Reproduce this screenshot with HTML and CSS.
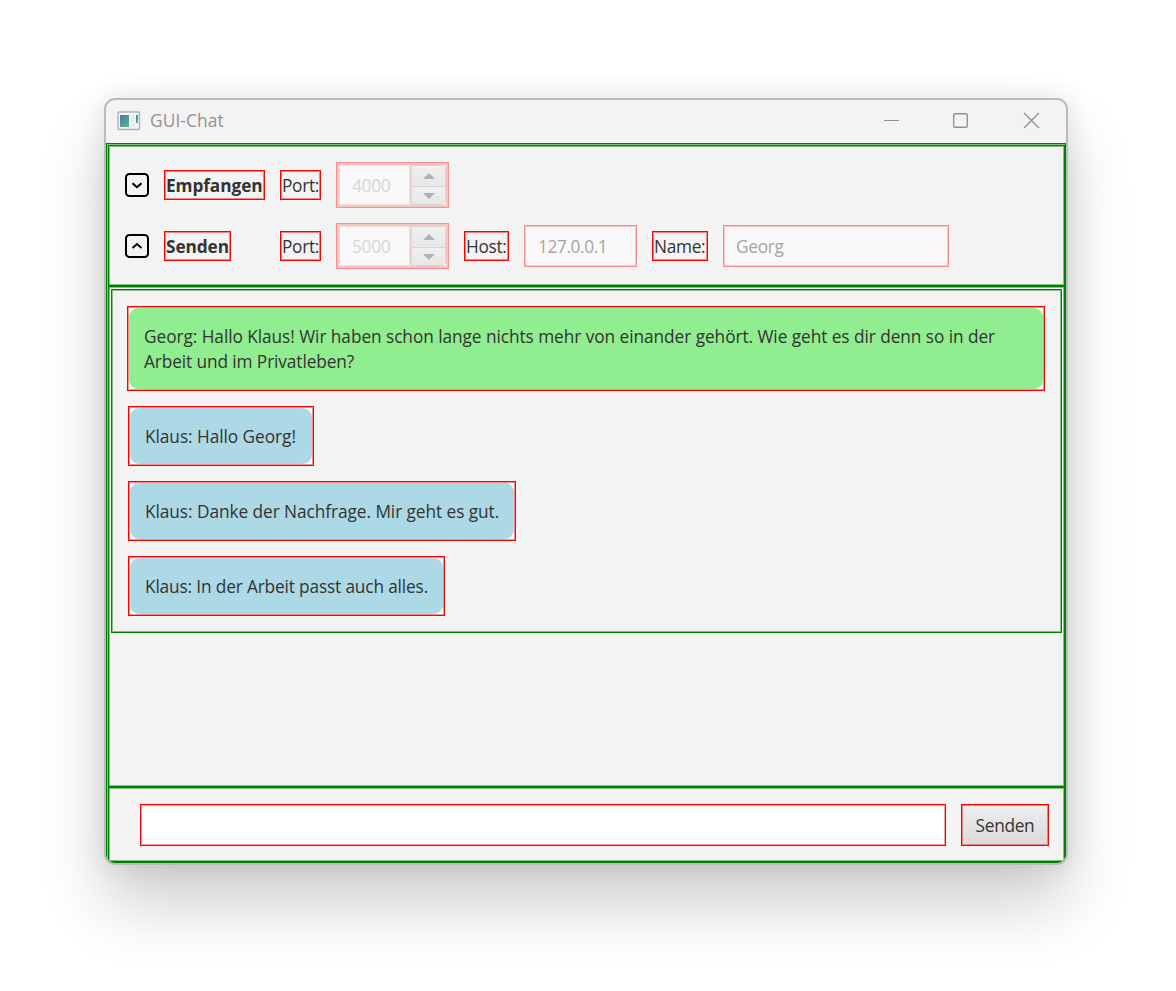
FILE: index.html
```html
<!DOCTYPE html>
<html lang="de">
<head>
<meta charset="utf-8">
<title>GUI-Chat</title>
<link rel="stylesheet" href="styles.css">
</head>
<body>
<div class="window">
  <header class="titlebar">
    <svg class="app-icon" width="24" height="20" viewBox="0 0 24 20">
      <defs><linearGradient id="g" x1="0" y1="0" x2="0.6" y2="1"><stop offset="0" stop-color="#4777a8"/><stop offset="1" stop-color="#5cb18a"/></linearGradient></defs>
      <rect x="1" y="1" width="21.500" height="17.500" rx="1" fill="#f5f6f7" stroke="#a9b2ba" stroke-width="1.400"/>
      <rect x="3" y="4" width="9" height="12" fill="url(#g)"/>
      <path d="M14 4h4v7h-4zM14 12.500h4v3.500h-4z" fill="#e9ebec"/>
      <rect x="19" y="4" width="2" height="8" fill="url(#g)"/>
    </svg>
    <span class="title">GUI-Chat</span>
    <svg class="controls" width="158" height="18" viewBox="0 0 158 18" fill="none" stroke="#929292" stroke-width="1.400">
      <path d="M1 9.500h15" stroke-width="1"/>
      <rect x="70.700" y="2.700" width="13.600" height="13.600" rx="1.200"/>
      <path d="M141 2l15 15M156 2l-15 15"/>
    </svg>
  </header>
  <main class="app">
    <section class="pane settings">
      <svg class="toggle" width="24" height="24" viewBox="0 0 24 24"><rect x="1" y="1" width="22" height="22" rx="3.500"/><path d="M7.500 10.200l4.500 4 4.500-4"/></svg>
      <span class="label strong empf">Empfangen</span>
      <span class="label port">Port:</span>
      <div class="spinner"><span class="value">4000</span><div class="arrows"><i class="up"></i><i class="down"></i></div></div>

      <svg class="toggle second" width="24" height="24" viewBox="0 0 24 24"><rect x="1" y="1" width="22" height="22" rx="3.500"/><path d="M7.500 14l4.500-4 4.500 4"/></svg>
      <span class="label strong send">Senden</span>
      <span class="label port">Port:</span>
      <div class="spinner"><span class="value">5000</span><div class="arrows"><i class="up"></i><i class="down"></i></div></div>
      <span class="label host">Host:</span>
      <div class="field disabled ip">127.0.0.1</div>
      <span class="label name">Name:</span>
      <div class="field disabled person">Georg</div>
    </section>
    <section class="pane history">
      <div class="messages">
        <div class="message own"><p><span class="l1">Georg: Hallo Klaus! Wir haben schon lange nichts mehr von einander gehört. Wie geht es dir denn so in der</span><br><span class="l2">Arbeit und im Privatleben?</span></p></div>
        <div class="message w1"><p>Klaus: Hallo Georg!</p></div>
        <div class="message w2"><p>Klaus: Danke der Nachfrage. Mir geht es gut.</p></div>
        <div class="message w3"><p>Klaus: In der Arbeit passt auch alles.</p></div>
      </div>
    </section>
    <section class="pane compose">
      <div class="field entry"></div>
      <div class="button">Senden</div>
    </section>
  </main>
</div>
</body>
</html>
```

FILE: styles.css
```css
* { box-sizing: border-box; }
body {
  margin: 0;
  height: 991px;
  padding: 98px 0 0 104px;
  overflow: hidden;
  background: #fff;
  color: #333;
  font: 17.300px/25px "Open Sans", "Noto Sans", sans-serif;
  letter-spacing: -0.300px;
  white-space: nowrap;
}
.window {
  width: 964px;
  height: 767px;
  border: 2px solid #bbb;
  border-radius: 11px;
  overflow: hidden;
  background: #f3f3f3;
  box-shadow: 0 40px 64px rgba(0, 0, 0, .19), 0 0 28px rgba(0, 0, 0, .1);
}
.titlebar {
  height: 43px;
  padding: 0 25px 2px 11px;
  display: flex;
  align-items: center;
  color: #929292;
}
.title { margin-left: 9px; flex: 1; letter-spacing: 0.120px; }
.controls { margin-bottom: 2px; }
.app {
  height: 720px;
  border: 1px solid green;
  padding: 1px 0 0 1px;
  background: #80c080;
  display: flex;
  flex-direction: column;
}
.pane {
  border: 1px solid green;
  background: #f3f3f3;
  box-shadow: inset 0 0 0 1px #80c080;
}
.settings {
  height: 141px;
  padding: 16px;
  display: grid;
  grid-template-columns: 24px 101px 41px 113px 45px 113px 56px 226px;
  grid-auto-rows: 46px;
  gap: 15px;
  align-items: center;
  justify-items: start;
}
.second { grid-column: 1; }
.toggle { display: block; fill: none; stroke: #000; stroke-width: 2; }
.label {
  height: 30px;
  padding-left: 1px;
  line-height: 30px;
  border: 1px solid red;
  box-shadow: inset 0 0 0 1px #f98080;
}
.strong { font-weight: 700; letter-spacing: -0.100px; }
.empf { width: 101px; }
.send { width: 67px; }
.port { width: 41px; }
.host { width: 45px; }
.name { width: 56px; }
.spinner {
  width: 113px;
  height: 46px;
  padding: 2px;
  display: flex;
  border: 1px solid #f99090;
  box-shadow: inset 0 0 0 2px #f7c3c3;
  color: #d6d6d6;
}
.value {
  width: 72px;
  padding-left: 12px;
  line-height: 40px;
  border: 1px solid #f9dede;
  border-right: 2px solid #f9d4d4;
  background: #f9f9f9;
}
.arrows {
  flex: 1;
  display: grid;
  grid-template-rows: 21px 1fr;
  border: 1px solid #d7d7d7;
  border-radius: 0 4px 4px 0;
  background: #ececec;
}
.arrows i { display: grid; place-items: center; background: linear-gradient(#f0f0f0, #e7e7e7); }
.arrows i::after { content: ""; border: 6px solid transparent; }
.up { border-bottom: 1px solid #d4d4d4; }
.arrows .up::after { border-bottom-color: #b2b2b2; border-top: 0; }
.arrows .down::after { border-top-color: #b2b2b2; border-bottom: 0; }
.field { height: 42px; line-height: 42px; border: 1px solid; padding-left: 13px; }
.disabled {
  border-color: #f99090;
  box-shadow: inset 0 0 0 1px #f7c3c3;
  background: linear-gradient(#f5f5f5, #f9f9f9 8px);
  color: #a5a5a5;
}
.ip { width: 113px; letter-spacing: -0.400px; }
.person { width: 226px; padding-left: 12px; }
.history { height: 501px; padding: 2px; }
.messages {
  height: 344px;
  padding: 16px 16px 16px 15px;
  display: flex;
  flex-direction: column;
  gap: 15px;
  border: 1px solid green;
  box-shadow: inset 0 0 0 1px #80c080, 0 -1px 0 #fff, -1px 0 0 #fff, 1px 0 0 #fff;
}
.message {
  height: 60px;
  margin-left: 1px;
  padding: 1px;
  border: 1px solid red;
  background: #fff;
  box-shadow: inset 0 0 0 1px #f88;
}
.message p {
  margin: 0;
  height: 100%;
  padding: 16px 0 0 15px;
  border-radius: 9px;
  background: lightblue;
}
.own { height: 85px; margin-left: 0; }
.own p { background: lightgreen; }
.l1 { letter-spacing: -0.066px; }
.l2 { letter-spacing: -0.110px; }
.w1 { width: 186px; letter-spacing: -0.060px; }
.w2 { width: 388px; letter-spacing: -0.070px; }
.w3 { width: 317px; letter-spacing: -0.160px; }
.compose { height: 75px; padding: 16px 15px 15px 31px; display: flex; gap: 15px; }
.entry {
  width: 806px;
  border-color: red;
  background: linear-gradient(#f3f3f3, #fff 8px);
  box-shadow: inset 0 0 0 1px #f99;
}
.button {
  width: 88px;
  height: 42px;
  line-height: 42px;
  text-align: center;
  border: 1px solid red;
  background: linear-gradient(#ededed, #d9d9d9);
  box-shadow: inset 0 0 0 1px #f08080;
}
```
